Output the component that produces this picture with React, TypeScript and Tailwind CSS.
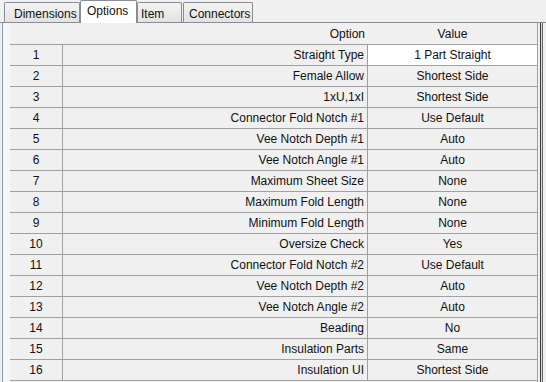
import React from 'react';

const ROWS: [string, string][] = [
  ['Straight Type', '1 Part Straight'],
  ['Female Allow', 'Shortest Side'],
  ['1xU,1xI', 'Shortest Side'],
  ['Connector Fold Notch #1', 'Use Default'],
  ['Vee Notch Depth #1', 'Auto'],
  ['Vee Notch Angle #1', 'Auto'],
  ['Maximum Sheet Size', 'None'],
  ['Maximum Fold Length', 'None'],
  ['Minimum Fold Length', 'None'],
  ['Oversize Check', 'Yes'],
  ['Connector Fold Notch #2', 'Use Default'],
  ['Vee Notch Depth #2', 'Auto'],
  ['Vee Notch Angle #2', 'Auto'],
  ['Beading', 'No'],
  ['Insulation Parts', 'Same'],
  ['Insulation UI', 'Shortest Side'],
];

const Tab: React.FC<{ label: string; cls: string; active?: boolean }> = ({ label, cls, active }) =>
  active ? (
    <div
      className={`${cls} h-[23px] -mb-px relative z-10 bg-white border border-b-0 border-[#898c95] rounded-t-[2px] flex items-start pt-[4px]`}
    >
      {label}
    </div>
  ) : (
    <div
      className={`${cls} h-[20px] bg-gradient-to-b from-[#f3f3f3] to-[#e3e3e3] border border-b-0 border-[#898c95] rounded-t-[2px] flex items-center pt-[3px]`}
    >
      {label}
    </div>
  );

const App: React.FC = () => {
  return (
    <div
      className="w-[546px] h-[382px] bg-[#f0f0f0] overflow-hidden flex flex-col text-[12px] text-[#111] leading-none"
      style={{ fontFamily: '"Liberation Sans", Arial, sans-serif' }}
    >
      {/* Tab strip */}
      <div className="h-[23px] flex items-end pl-[4px] border-b border-[#898c95] shrink-0">
        <Tab label="Dimensions" cls="w-[76px] pl-[9px]" />
        <Tab label="Options" cls="w-[57px] pl-[6px]" active />
        <Tab label="Item" cls="w-[45px] pl-[3px]" />
        <div className="w-px" />
        <Tab label="Connectors" cls="w-[70px] pl-[5px]" />
      </div>

      {/* Panel */}
      <div className="flex-1 flex min-h-0">
        <div className="w-[10px] flex shrink-0">
          <div className="w-[2px]" />
          <div className="w-px bg-[#8aa0bd]" />
          <div className="flex-1 bg-[#f7f7f7]" />
        </div>

        <div className="w-[528px] flex flex-col border-r border-[#a0a0a0]">
          {/* Header */}
          <div className="h-[22px] flex border-b border-[#a0a0a0] bg-[#f0f0f0] shrink-0">
            <div className="w-[53px]" />
            <div className="w-[305px] flex items-center justify-end pr-[3px]">Option</div>
            <div className="flex-1 flex items-center justify-center">Value</div>
          </div>

          {ROWS.map(([opt, val], i) => (
            <div key={opt} className="h-[21px] flex border-b border-[#a0a0a0] shrink-0">
              <div className="w-[53px] border-r border-[#a0a0a0] flex items-center justify-center">{i + 1}</div>
              <div className="w-[305px] border-r border-[#a0a0a0] flex items-center justify-end pr-[3px]">{opt}</div>
              <div className={`flex-1 flex items-center justify-center ${i === 0 ? 'bg-white' : ''}`}>{val}</div>
            </div>
          ))}
        </div>

        <div className="flex-1 flex">
          <div className="w-[2px]" />
          <div className="w-px bg-[#3c3c3c]" />
          <div className="w-px bg-[#d8d8d8]" />
          <div className="w-px bg-[#6a6a6a]" />
        </div>
      </div>
    </div>
  );
};

export default App;
